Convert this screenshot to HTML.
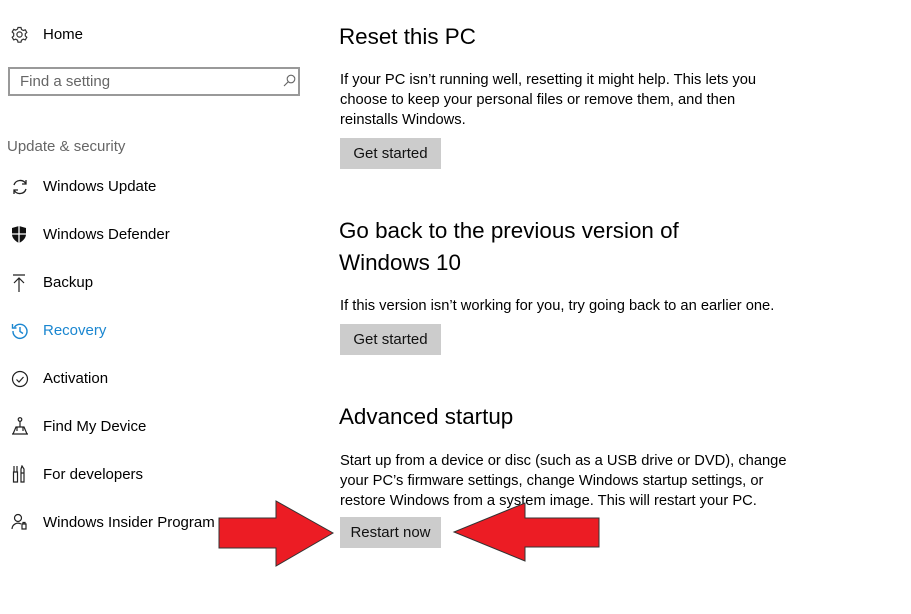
<!DOCTYPE html>
<html><head><style>
body{margin:0;width:911px;height:614px;background:#fff;position:relative;overflow:hidden;font-family:"Liberation Sans",sans-serif;color:#000}
.a{position:absolute;white-space:nowrap}
.nav{font-size:15px;left:43px}
.ic{position:absolute;left:11px}
h2{position:absolute;margin:0;font-weight:normal;font-size:22.4px;left:339px;line-height:32px;white-space:nowrap}
p{position:absolute;margin:0;font-size:14.7px;line-height:20px;left:340px;white-space:nowrap}
.btn{position:absolute;left:340px;width:101px;height:31px;background:#ccc;font-size:15px;text-align:center;line-height:32px;color:#111}
</style></head><body>
<svg class="ic" style="top:26px" width="17" height="17" viewBox="0 0 17 17" fill="none" stroke="#333" stroke-width="1.2"><circle cx="8.5" cy="8.5" r="2.6"/><path d="M7 1.5h3l.5 2 1.8 1 2-.7 1.5 2.6-1.5 1.4v2.1l1.5 1.4-1.5 2.6-2-.7-1.8 1-.5 2H7l-.5-2-1.8-1-2 .7-1.5-2.6 1.5-1.4V7.4L1.2 6l1.5-2.6 2 .7 1.8-1z"/></svg>
<div class="a nav" style="top:26px">Home</div>
<div class="a" style="left:8px;top:67px;width:292px;height:29px;border:2px solid #999;box-sizing:border-box"></div>
<div class="a" style="left:20px;top:73px;font-size:15px;color:#666">Find a setting</div>
<svg class="a" style="left:283px;top:74px" width="13" height="13" viewBox="0 0 13 13" fill="none" stroke="#666" stroke-width="1.1"><circle cx="8" cy="5" r="3.8"/><path d="M5.2 7.8 1 12"/></svg>
<div class="a" style="left:7px;top:138px;font-size:15px;color:#666">Update &amp; security</div>
<svg class="ic" style="top:178px" width="18" height="18" viewBox="0 0 18 18" fill="none" stroke="#222" stroke-width="1.3"><path d="M3 7a6.5 6.5 0 0 1 12-1M15 11a6.5 6.5 0 0 1-12 1M15 2v4h-4M3 16v-4h4"/></svg>
<div class="a nav" style="top:178px">Windows Update</div>
<svg class="ic" style="top:226px" width="16" height="17" viewBox="0 0 16 17"><path d="M1 2 8 0l7 2v6c0 4-3 7-7 9-4-2-7-5-7-9z" fill="#111"/><path d="M8 0v17M1 8h14" stroke="#fff" stroke-width="1.3"/></svg>
<div class="a nav" style="top:226px">Windows Defender</div>
<svg class="ic" style="top:274px" width="16" height="18" viewBox="0 0 16 18" fill="none" stroke="#222" stroke-width="1.2"><path d="M2 1h12M8 4v14M3 9l5-5 5 5"/></svg>
<div class="a nav" style="top:274px">Backup</div>
<svg class="ic" style="top:322px" width="18" height="18" viewBox="0 0 18 18" fill="none" stroke="#1a86d0" stroke-width="1.4"><path d="M3.5 5A7 7 0 1 1 2 9M1.5 2v4h4M9 5v4.5l3 2"/></svg>
<div class="a nav" style="top:322px;color:#1a86d0">Recovery</div>
<svg class="ic" style="top:370px" width="18" height="18" viewBox="0 0 18 18" fill="none" stroke="#222" stroke-width="1.2"><circle cx="9" cy="9" r="7.5"/><path d="M5.5 9.5l2.5 2.5 4.5-5"/></svg>
<div class="a nav" style="top:370px">Activation</div>
<svg class="ic" style="top:417px" width="18" height="18" viewBox="0 0 18 18" fill="none" stroke="#222" stroke-width="1.2"><circle cx="9" cy="2.5" r="1.8"/><path d="M9 4.5v5M1 17h16M2 17l3-7h8l3 7M6 10v4M12 10v4"/></svg>
<div class="a nav" style="top:418px">Find My Device</div>
<svg class="ic" style="top:465px" width="16" height="18" viewBox="0 0 16 18" fill="none" stroke="#222" stroke-width="1.2"><path d="M3 1v6M6 1v6M2.5 7h4v10h-4zM11 1l2 3v4h-3V4zM10 8h3v9h-3z"/></svg>
<div class="a nav" style="top:466px">For developers</div>
<svg class="ic" style="top:513px" width="18" height="18" viewBox="0 0 18 18" fill="none" stroke="#222" stroke-width="1.2"><circle cx="7" cy="5" r="3.5"/><path d="M1 16a6 6 0 0 1 9-5M11 11h4v5h-4zM12 11V9.5h2V11"/></svg>
<div class="a nav" style="top:514px">Windows Insider Program</div>

<h2 style="top:21px">Reset this PC</h2>
<p style="top:70px">If your PC isn’t running well, resetting it might help. This lets you<br>choose to keep your personal files or remove them, and then<br>reinstalls Windows.</p>
<div class="btn" style="top:138px">Get started</div>
<h2 style="top:215px">Go back to the previous version of<br>Windows 10</h2>
<p style="top:296px">If this version isn’t working for you, try going back to an earlier one.</p>
<div class="btn" style="top:324px">Get started</div>
<h2 style="top:401px">Advanced startup</h2>
<p style="top:451px">Start up from a device or disc (such as a USB drive or DVD), change<br>your PC’s firmware settings, change Windows startup settings, or<br>restore Windows from a system image. This will restart your PC.</p>
<div class="btn" style="top:517px;height:31px">Restart now</div>
<svg class="a" style="left:0;top:0" width="911" height="614"><path d="M219 518H276V501L333 533 276 566V548H219Z" fill="#ec1c24" stroke="#333" stroke-width="1"/><path d="M599 518H525V503L454 532 525 561V547H599Z" fill="#ec1c24" stroke="#333" stroke-width="1"/></svg>
</body></html>
